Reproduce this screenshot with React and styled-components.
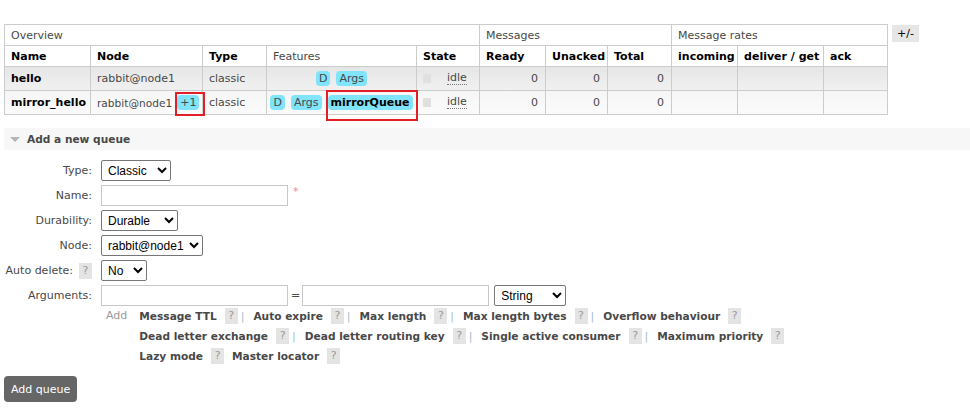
import React from 'react';
import styled, { createGlobalStyle } from 'styled-components';

const Global = createGlobalStyle`
  html, body { margin: 0; padding: 0; background: #fff; }
  body {
    font-family: "DejaVu Sans", Verdana, sans-serif;
    font-size: 11px;
    color: #484848;
  }
`;

const Page = styled.div`
  padding: 24px 0 0 4px;
`;

const TopRow = styled.div`
  display: flex;
  align-items: flex-start;
  gap: 4px;
`;

const Table = styled.table`
  border-collapse: collapse;
  table-layout: fixed;
  width: 884px;
`;

const GroupTh = styled.th`
  height: 20px;
  padding: 0 6px;
  text-align: left;
  font-weight: normal;
  color: #484848;
  border: 1px solid #ccc;
  background: #fff;
  white-space: nowrap;
`;

const HeadTh = styled.th`
  height: 20px;
  padding: 0 6px;
  text-align: left;
  font-weight: ${p => (p.$plain ? 'normal' : 'bold')};
  color: ${p => (p.$plain ? '#484848' : '#000')};
  border: 1px solid #ccc;
  background: #fff;
  white-space: nowrap;
`;

const Row = styled.tr`
  background: ${p => (p.$alt ? 'linear-gradient(#f6f6f6, #fbfbfb)' : 'linear-gradient(#e6e6e6, #f1f1f1)')};
`;

const Td = styled.td`
  height: 23px;
  padding: 0 ${p => (p.$num ? '7px' : '6px')};
  border: 1px solid #ccc;
  text-align: ${p => p.$align || 'left'};
  white-space: nowrap;
  color: ${p => (p.$bold ? '#000' : '#484848')};
  font-weight: ${p => (p.$bold ? 'bold' : 'normal')};
`;

const Features = styled.div`
  display: flex;
  justify-content: center;
  align-items: center;
  gap: 6px;
`;

const Badge = styled.span`
  display: inline-block;
  background: #80e4fb;
  border-radius: 4px;
  padding: 0 3px;
  line-height: 15px;
  font-size: 11px;
  color: ${p => (p.$strong ? '#000' : '#484848')};
  font-weight: ${p => (p.$strong ? 'bold' : 'normal')};
`;

const Marked = styled.span`
  position: relative;
  display: inline-block;
  &::after {
    content: '';
    position: absolute;
    top: ${p => p.$t}px;
    bottom: ${p => p.$b}px;
    left: ${p => p.$l}px;
    right: ${p => p.$r}px;
    border: 2px solid #e01f26;
    pointer-events: none;
  }
`;

const NodeCell = styled.span`
  display: inline-flex;
  align-items: center;
  gap: 5px;
  font-size: 10.6px;
`;

const StateWrap = styled.span`
  display: inline-flex;
  align-items: center;
  gap: 16px;
`;

const StatusBox = styled.span`
  display: inline-block;
  width: 8px;
  height: 9px;
  background: #e0e0e0;
`;

const Idle = styled.abbr`
  text-decoration: none;
  border-bottom: 1px dotted #777;
  line-height: 13px;
`;

const ToggleBtn = styled.span`
  display: inline-block;
  margin-top: 1px;
  padding: 0 5px;
  line-height: 17px;
  background: #e6e6e6;
  color: #000;
`;

const SectionBar = styled.div`
  margin-top: 13px;
  height: 22px;
  display: flex;
  align-items: center;
  gap: 7px;
  padding-left: 6px;
  background: #f7f7f7;
  font-weight: bold;
  font-size: 10.6px;
  color: #484848;
`;

const Triangle = styled.span`
  width: 0;
  height: 0;
  border-left: 5px solid transparent;
  border-right: 5px solid transparent;
  border-top: 5px solid #b4b4b4;
`;

const Form = styled.div`
  margin-top: 10px;
  display: grid;
  grid-template-columns: 88px auto;
  column-gap: 9px;
  align-items: center;
`;

const Label = styled.div`
  height: ${p => (p.$h || 25)}px;
  display: flex;
  align-items: flex-start;
  justify-content: flex-end;
  padding-top: 4px;
  box-sizing: border-box;
  white-space: nowrap;
  color: #484848;
`;

const Field = styled.div`
  height: ${p => (p.$h || 25)}px;
  display: flex;
  align-items: flex-start;
`;

const Select = styled.select`
  height: 21px;
  width: ${p => p.$w}px;
  font-family: "Liberation Sans", Arial, sans-serif;
  font-size: 12px;
  color: #000;
  border: 1px solid #767676;
  border-radius: 2px;
  background: #fff;
  padding: 0 2px;
  margin-left: ${p => p.$ml || 0}px;
`;

const Input = styled.input`
  height: 21px;
  width: ${p => p.$w}px;
  box-sizing: border-box;
  border: 1px solid #c8c8c8;
  padding: 0 3px;
  margin: 0;
`;

const Required = styled.span`
  color: #f28a8a;
  margin-left: 5px;
  font-size: 11px;
  line-height: 14px;
`;

const Equals = styled.span`
  margin: 0 2px 0 3px;
  line-height: 21px;
  color: #484848;
`;

const Help = styled.span`
  display: inline-block;
  width: 13px;
  height: 16px;
  line-height: 16px;
  text-align: center;
  background: #e4e4e4;
  color: #999;
  font-weight: normal;
  font-size: 11px;
  margin-left: ${p => (p.$ml === undefined ? 8 : p.$ml)}px;
`;

const ArgHelpers = styled.div`
  grid-column: 2;
  display: flex;
  align-items: flex-start;
`;

const AddText = styled.span`
  color: #999;
  padding: 3px 12px 0 5px;
`;

const Lines = styled.div`
  display: flex;
  flex-direction: column;
`;

const Line = styled.div`
  height: 20px;
  display: flex;
  align-items: center;
  gap: ${p => p.$gap || 0}px;
  white-space: nowrap;
`;

const ArgLink = styled.a`
  font-weight: bold;
  font-size: 10.6px;
  color: #484848;
  text-decoration: none;
  display: inline-flex;
  align-items: center;
`;

const Sep = styled.span`
  color: #a6bccf;
  margin: 0 9px 0 3px;
`;

const Button = styled.button`
  margin-top: 10px;
  height: 26px;
  padding: 0 7px;
  background: #666;
  color: #fff;
  border: none;
  border-radius: 4px;
  font-family: "DejaVu Sans", Verdana, sans-serif;
  font-size: 11px;
`;

const cols = [86, 112, 64, 150, 63, 66, 62, 64, 66, 86, 64];

const lines = [
  ['Message TTL', 'Auto expire', 'Max length', 'Max length bytes', 'Overflow behaviour'],
  ['Dead letter exchange', 'Dead letter routing key', 'Single active consumer', 'Maximum priority'],
];

export default function App() {
  return (
    <Page>
      <Global />
      <TopRow>
        <Table>
          <colgroup>
            {cols.map((w, i) => (
              <col key={i} style={{ width: w }} />
            ))}
          </colgroup>
          <thead>
            <tr>
              <GroupTh colSpan={5}>Overview</GroupTh>
              <GroupTh colSpan={3}>Messages</GroupTh>
              <GroupTh colSpan={3}>Message rates</GroupTh>
            </tr>
            <tr>
              <HeadTh>Name</HeadTh>
              <HeadTh>Node</HeadTh>
              <HeadTh>Type</HeadTh>
              <HeadTh $plain>Features</HeadTh>
              <HeadTh>State</HeadTh>
              <HeadTh>Ready</HeadTh>
              <HeadTh>Unacked</HeadTh>
              <HeadTh>Total</HeadTh>
              <HeadTh>incoming</HeadTh>
              <HeadTh>deliver / get</HeadTh>
              <HeadTh>ack</HeadTh>
            </tr>
          </thead>
          <tbody>
            <Row>
              <Td $bold>hello</Td>
              <Td>rabbit@node1</Td>
              <Td>classic</Td>
              <Td>
                <Features>
                  <Badge>D</Badge>
                  <Badge>Args</Badge>
                </Features>
              </Td>
              <Td>
                <StateWrap>
                  <StatusBox />
                  <Idle>idle</Idle>
                </StateWrap>
              </Td>
              <Td $num $align="right">0</Td>
              <Td $num $align="right">0</Td>
              <Td $num $align="right">0</Td>
              <Td />
              <Td />
              <Td />
            </Row>
            <Row $alt>
              <Td $bold>mirror_hello</Td>
              <Td>
                <NodeCell>
                  rabbit@node1
                  <Marked $t={-3} $b={-6} $l={-2} $r={-6}>
                    <Badge>+1</Badge>
                  </Marked>
                </NodeCell>
              </Td>
              <Td>classic</Td>
              <Td>
                <Features>
                  <Badge>D</Badge>
                  <Badge>Args</Badge>
                  <Marked $t={-5} $b={-11} $l={-2} $r={-5}>
                    <Badge $strong>mirrorQueue</Badge>
                  </Marked>
                </Features>
              </Td>
              <Td>
                <StateWrap>
                  <StatusBox />
                  <Idle>idle</Idle>
                </StateWrap>
              </Td>
              <Td $num $align="right">0</Td>
              <Td $num $align="right">0</Td>
              <Td $num $align="right">0</Td>
              <Td />
              <Td />
              <Td />
            </Row>
          </tbody>
        </Table>
        <ToggleBtn>+/-</ToggleBtn>
      </TopRow>

      <SectionBar>
        <Triangle />
        Add a new queue
      </SectionBar>

      <Form>
        <Label>Type:</Label>
        <Field>
          <Select $w={70} defaultValue="Classic">
            <option>Classic</option>
            <option>Quorum</option>
          </Select>
        </Field>

        <Label>Name:</Label>
        <Field>
          <Input $w={187} />
          <Required>*</Required>
        </Field>

        <Label>Durability:</Label>
        <Field>
          <Select $w={77} defaultValue="Durable">
            <option>Durable</option>
            <option>Transient</option>
          </Select>
        </Field>

        <Label>Node:</Label>
        <Field>
          <Select $w={102} defaultValue="rabbit@node1">
            <option>rabbit@node1</option>
          </Select>
        </Field>

        <Label>
          Auto delete:<Help $ml={6} style={{ marginTop: -1 }}>?</Help>
        </Label>
        <Field>
          <Select $w={46} defaultValue="No">
            <option>No</option>
            <option>Yes</option>
          </Select>
        </Field>

        <Label $h={21}>Arguments:</Label>
        <Field $h={21}>
          <Input $w={187} />
          <Equals>=</Equals>
          <Input $w={187} />
          <Select $w={72} $ml={5} defaultValue="String">
            <option>String</option>
            <option>Number</option>
            <option>Boolean</option>
            <option>List</option>
          </Select>
        </Field>

        <ArgHelpers>
          <AddText>Add</AddText>
          <Lines>
            {lines.map((line, i) => (
              <Line key={i}>
                {line.map((name, j) => (
                  <React.Fragment key={name}>
                    <ArgLink href="#">{name}</ArgLink>
                    <Help>?</Help>
                    {j < line.length - 1 && <Sep>|</Sep>}
                  </React.Fragment>
                ))}
              </Line>
            ))}
            <Line $gap={8}>
              <ArgLink href="#">
                Lazy mode<Help>?</Help>
              </ArgLink>
              <ArgLink href="#">
                Master locator<Help>?</Help>
              </ArgLink>
            </Line>
          </Lines>
        </ArgHelpers>
      </Form>

      <Button>Add queue</Button>
    </Page>
  );
}
